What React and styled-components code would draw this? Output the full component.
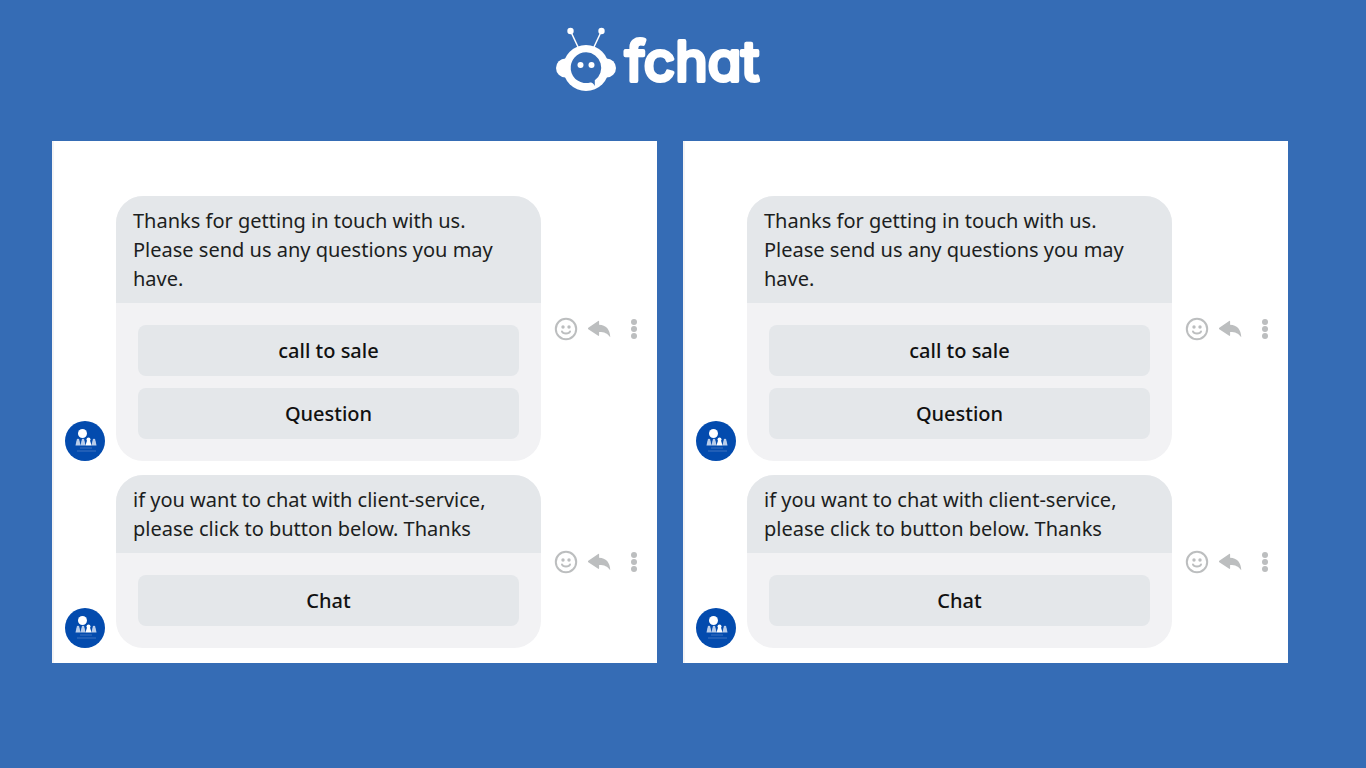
import React from "react";
import styled, { createGlobalStyle } from "styled-components";

const GlobalStyle = createGlobalStyle`
  *, *::before, *::after { box-sizing: border-box; }
  body {
    margin: 0;
    background: #356cb5;
    color: #1c1e21;
    font-family: "Noto Sans", "Open Sans", sans-serif;
  }
`;

const Page = styled.div`
  min-height: 100vh;
  padding: 24px 78px 48px 52px;
  background: #356cb5;
`;

const Header = styled.header`
  display: flex;
  justify-content: center;
  height: 117px;
  padding-right: 20px;
`;

const LogoSvg = styled.svg`
  display: block;
  width: 212px;
  height: 72px;
`;

const Wordmark = styled.text`
  font-family: Inter, sans-serif;
  font-size: 55px;
  font-weight: 400;
  font-optical-sizing: none;
  font-feature-settings: "cv11";
  fill: #fff;
  stroke: #fff;
  stroke-width: 4px;
  stroke-linejoin: round;
`;

const Panels = styled.main`
  display: grid;
  grid-template-columns: 1fr 1fr;
  gap: 26px;
`;

const Panel = styled.section`
  display: flex;
  flex-direction: column;
  gap: 14px;
  padding: 55px 19px 15px 11px;
  border-left: 2px solid #f4f4f5;
  background: #fff;
`;

const Message = styled.article`
  display: flex;
`;

const Avatar = styled.svg`
  flex: none;
  align-self: flex-end;
  width: 40px;
  height: 40px;
  margin-right: 11px;
`;

const Bubble = styled.div`
  flex: 1;
  min-width: 0;
  overflow: hidden;
  border-radius: 27px;
  background: #f2f2f4;
`;

const MessageText = styled.p`
  margin: 0;
  padding: 10px 17px;
  background: #e4e7ea;
  font-size: 20px;
  line-height: 29px;
`;

const Choices = styled.div`
  display: grid;
  gap: 12px;
  padding: 22px;
`;

const ChoiceButton = styled.button`
  height: 51px;
  padding: 0;
  border: 0;
  border-radius: 8px;
  background: #e4e7ea;
  color: #111;
  font: 500 20px/29px "Noto Sans", "Open Sans", sans-serif;
  cursor: pointer;
`;

const Actions = styled.div`
  display: flex;
  align-items: center;
  gap: 10px;
  margin-left: 13px;
`;

const IconButton = styled.button`
  display: flex;
  justify-content: ${(p) => p.$align || "center"};
  width: ${(p) => p.$width || 24}px;
  padding: 0;
  border: 0;
  background: none;
  color: #bcbebf;
  cursor: pointer;
`;

function Logo() {
  return (
    <LogoSvg viewBox="0 0 212 72" role="img" aria-label="fchat">
      <g stroke="#fff" strokeWidth="1.5" strokeLinecap="round">
        <path d="M16.500 7 24.500 24M47.500 7 39.500 24" />
      </g>
      <g fill="#fff">
        <circle cx="16.500" cy="7" r="3.200" />
        <circle cx="47.500" cy="7" r="3.200" />
        <circle cx="32" cy="44" r="23" />
        <ellipse cx="11.500" cy="44" rx="9.500" ry="9.500" />
        <ellipse cx="52.500" cy="44" rx="9.500" ry="9.500" />
      </g>
      <path
        fill="#356cb5"
        d="M32.300 28.300a15.400 15.400 0 1 0 4 30.200c1.800-.4 3.200 1 4.500 3.500V56.200A15.400 15.400 0 0 0 32.300 28.300z"
      />
      <g fill="#fff">
        <circle cx="26.500" cy="41" r="3" />
        <circle cx="37.500" cy="41" r="3" />
      </g>
      <Wordmark x="71" y="57">fchat</Wordmark>
    </LogoSvg>
  );
}

function PageAvatar() {
  return (
    <Avatar viewBox="0 0 40 40" role="img" aria-label="Page avatar">
      <circle cx="20" cy="20" r="20" fill="#034bae" />
      <circle cx="17.500" cy="12.500" r="4.500" fill="#fff" />
      <g fill="#b9cdea">
        <path d="M10.500 24.500l1-5h3l1 5zM15.500 24.500l1-5h3l1 5zM26.500 24.500l1-5h3l1 5z" />
        <circle cx="13" cy="19" r="1.300" />
        <circle cx="18" cy="19" r="1.300" />
        <circle cx="29" cy="19" r="1.300" />
      </g>
      <path d="M20.500 24.500l1.500-5h3l1.500 5z" fill="#fff" />
      <circle cx="23.500" cy="18.500" r="2" fill="#fff" />
      <path d="M15 27h12M12 30h19" stroke="#3f73bf" strokeWidth="1" />
    </Avatar>
  );
}

function MessageActions() {
  return (
    <Actions>
      <IconButton aria-label="React">
        <svg width="24" height="24" viewBox="0 0 24 24" fill="none" stroke="currentColor" strokeWidth="2">
          <circle cx="12" cy="12" r="10.200" />
          <path d="M8 14.500c1 2.700 7 2.700 8 0" strokeLinecap="round" />
          <g fill="currentColor" stroke="none">
            <circle cx="9" cy="10" r="1.700" />
            <circle cx="15" cy="10" r="1.700" />
          </g>
        </svg>
      </IconButton>
      <IconButton aria-label="Reply">
        <svg width="24" height="24" viewBox="0 0 24 24" fill="currentColor">
          <path d="M.3 10.700 10.200 3.900c.5-.3.900 0 .9.500v3.300C18 7.900 22 12.300 22.300 20.300c-3-4-5.800-5.300-11.200-5.300v3.300c0 .5-.4.800-.9.500L.3 12.200c-.5-.5-.5-1 0-1.500z" />
        </svg>
      </IconButton>
      <IconButton aria-label="More" $align="flex-end" $width={16}>
        <svg width="8" height="24" viewBox="0 0 8 24" fill="currentColor">
          <circle cx="4" cy="5" r="3" />
          <circle cx="4" cy="12" r="3" />
          <circle cx="4" cy="19" r="3" />
        </svg>
      </IconButton>
    </Actions>
  );
}

const messages = [
  {
    text: "Thanks for getting in touch with us. Please send us any questions you may have.",
    choices: ["call to sale", "Question"],
  },
  {
    text: "if you want to chat with client-service, please click to button below. Thanks",
    choices: ["Chat"],
  },
];

function Conversation({ label }) {
  return (
    <Panel aria-label={label}>
      {messages.map((message) => (
        <Message key={message.text}>
          <PageAvatar />
          <Bubble>
            <MessageText>{message.text}</MessageText>
            <Choices>
              {message.choices.map((choice) => (
                <ChoiceButton key={choice}>{choice}</ChoiceButton>
              ))}
            </Choices>
          </Bubble>
          <MessageActions />
        </Message>
      ))}
    </Panel>
  );
}

export default function App() {
  return (
    <Page>
      <GlobalStyle />
      <Header>
        <Logo />
      </Header>
      <Panels>
        <Conversation label="First conversation" />
        <Conversation label="Second conversation" />
      </Panels>
    </Page>
  );
}
